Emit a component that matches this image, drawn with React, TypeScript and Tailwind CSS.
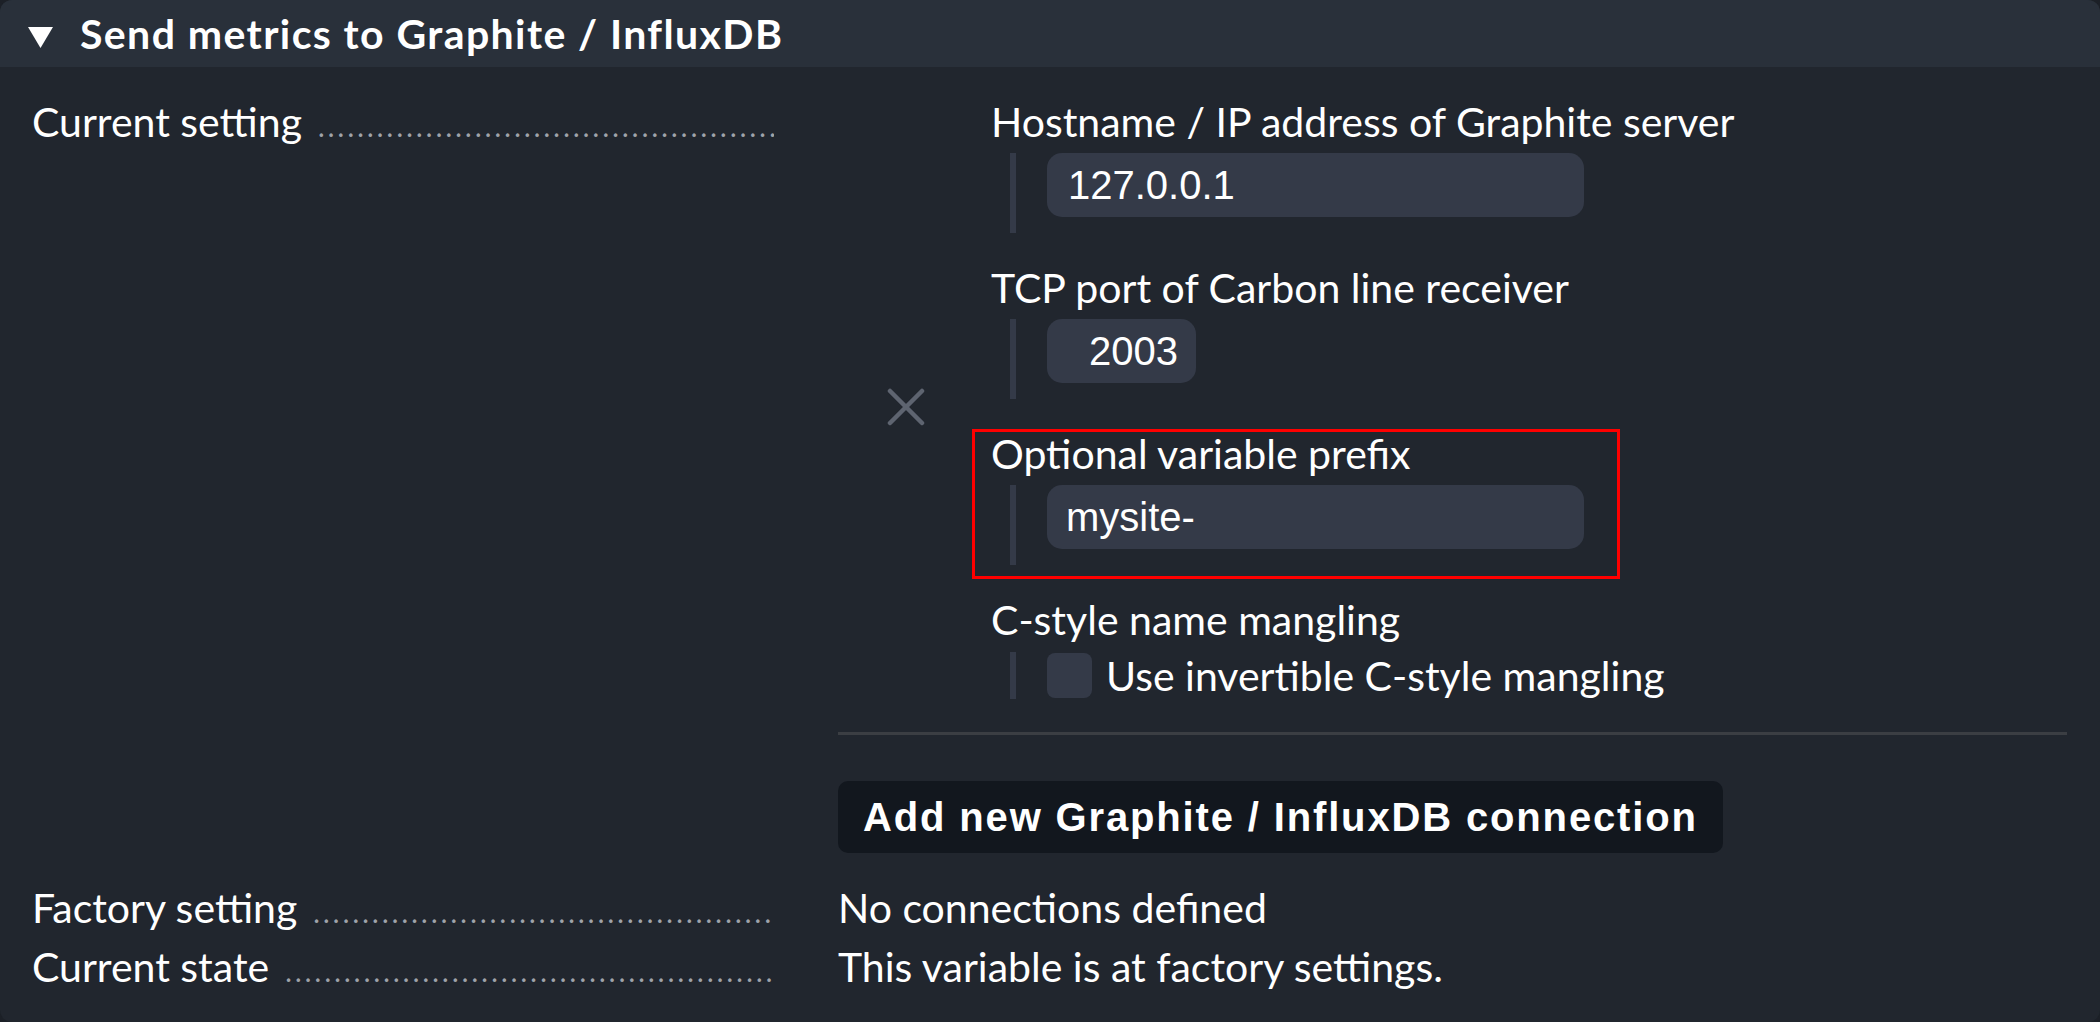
import React from "react";

const LATO = "font-['Lato','Noto_Sans',sans-serif]";
const ARIAL = "font-['Liberation_Sans','Arial',sans-serif]";

function Leader({ label }: { label: string }) {
  return (
    <div className={`flex items-baseline ${LATO} text-[41px] leading-[48px] text-white`}>
      <span className="whitespace-nowrap">{label}</span>
      <span
        aria-hidden="true"
        className="ml-[16px] flex-1 overflow-hidden whitespace-nowrap text-[28px] leading-[22px] tracking-[3.2px] text-[#9fa3aa]"
      >
        {".".repeat(51)}
      </span>
    </div>
  );
}

function Item({
  label,
  children,
  last,
}: {
  label: string;
  children: React.ReactNode;
  last?: boolean;
}) {
  return (
    <div>
      <div className={`${LATO} text-[41px] leading-[48px] text-white whitespace-nowrap`}>{label}</div>
      <div
        className={`ml-[19px] border-l-[6px] border-[#343a48] pl-[31px] ${
          last ? "mt-[8px]" : "mt-[7px] pb-[16px]"
        }`}
      >
        {children}
      </div>
    </div>
  );
}

function TextInput({ value, className = "" }: { value: string; className?: string }) {
  return (
    <div
      className={`flex h-[64px] items-center rounded-[15px] bg-[#343a48] ${ARIAL} text-[40px] text-white ${className}`}
    >
      {value}
    </div>
  );
}

export default function App() {
  return (
    <div className="h-[1022px] w-[2100px] bg-[#1c2027]">
      <div className="flex h-full flex-col overflow-hidden rounded-[12px] bg-[#21262e]">
        <div className="flex h-[67px] shrink-0 items-center bg-[#29303a] pl-[28px]">
          <svg width="25" height="21" viewBox="0 0 25 21" className="mt-[7px]">
            <polygon points="0,0 25,0 12.5,21" fill="#ffffff" />
          </svg>
          <span
            className={`ml-[27px] ${LATO} text-[41px] font-bold leading-none tracking-[1.4px] text-white`}
          >
            Send metrics to Graphite / InfluxDB
          </span>
        </div>

        <div className="grid grid-cols-[742px_1fr] gap-x-[64px] pl-[32px] pr-[33px] pt-[31px]">
          {/* Current setting */}
          <div>
            <Leader label="Current setting" />
          </div>
          <div>
            <div className="flex">
              <div className="flex w-[153px] shrink-0 items-center">
                <svg width="38" height="38" viewBox="0 0 38 38" className="ml-[49px] mt-[16px]">
                  <line x1="3" y1="3" x2="35" y2="35" stroke="#5e6470" strokeWidth="4.5" strokeLinecap="round" />
                  <line x1="35" y1="3" x2="3" y2="35" stroke="#5e6470" strokeWidth="4.5" strokeLinecap="round" />
                </svg>
              </div>
              <div className="flex flex-col gap-[31px]">
                <Item label="Hostname / IP address of Graphite server">
                  <TextInput value="127.0.0.1" className="w-[537px] pl-[21px]" />
                </Item>
                <Item label="TCP port of Carbon line receiver">
                  <TextInput value="2003" className="w-[149px] justify-end pr-[18px]" />
                </Item>
                <div className="relative">
                  <div className="pointer-events-none absolute left-[-19px] top-[-1px] h-[150px] w-[648px] border-[3px] border-[#ff0000]" />
                  <Item label="Optional variable prefix">
                    <TextInput value="mysite-" className="w-[537px] pl-[19px]" />
                  </Item>
                </div>
                <Item label="C-style name mangling" last>
                  <div className="flex h-[47px] items-center">
                    <div className="h-[45px] w-[45px] rounded-[8px] bg-[#343a48]" />
                    <span className={`ml-[14px] ${LATO} text-[41px] leading-[48px] text-white whitespace-nowrap`}>
                      Use invertible C-style mangling
                    </span>
                  </div>
                </Item>
              </div>
            </div>
            <div className="mt-[33px] h-[3px] bg-[#3b3e43]" />
            <div
              className={`mt-[46px] inline-flex h-[72px] items-center rounded-[10px] bg-[#12171e] px-[25px] ${ARIAL} text-[40px] font-bold tracking-[1.85px] text-white`}
            >
              Add new Graphite / InfluxDB connection
            </div>
          </div>

          {/* Factory setting */}
          <div className="mt-[31px]">
            <Leader label="Factory setting" />
          </div>
          <div className={`mt-[31px] ${LATO} text-[41px] leading-[48px] text-white`}>
            No connections defined
          </div>

          {/* Current state */}
          <div className="mt-[11px]">
            <Leader label="Current state" />
          </div>
          <div className={`mt-[11px] ${LATO} text-[41px] leading-[48px] text-white`}>
            This variable is at factory settings.
          </div>
        </div>
      </div>
    </div>
  );
}
